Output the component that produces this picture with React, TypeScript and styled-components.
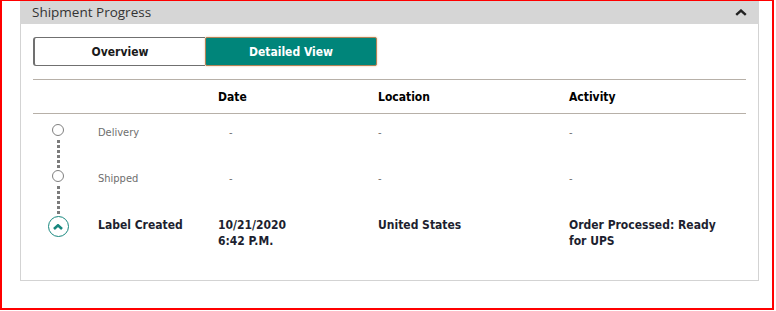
import React, {useState} from 'react';
import styled, {createGlobalStyle} from 'styled-components';

const GlobalStyle = createGlobalStyle`
  body {
    margin: 0;
    background: #fff;
    font-family: "DejaVu Sans Condensed", "DejaVu Sans", Tahoma, sans-serif;
    font-stretch: condensed;
  }
`

const Frame = styled.div`
  width: 774px;
  height: 310px;
  box-sizing: border-box;
  border: 2px solid #f00;
  border-top-width: 1px;
  padding-left: 18px;
  overflow: hidden;
`

const Panel = styled.div`
  width: 739px;
  box-sizing: border-box;
  border: 1px solid #d3d3d3;
  border-top: none;
`

const PanelHeader = styled.div`
  height: 23px;
  background-color: #d6d6d6;
  display: flex;
  align-items: center;
  justify-content: space-between;
  padding: 0 12px;
  margin: 0 -1px;
`

const PanelTitle = styled.div`
  font-family: "Open Sans", "Noto Sans", sans-serif;
  font-stretch: normal;
  font-size: 13.5px;
  color: #333;
  margin-top: -2px;
`

const PanelBody = styled.div`
  padding: 13px 12px 0;
`

const Toggle = styled.div`
  display: flex;
  width: 344px;
  height: 29px;
`

const ToggleButton = styled.button<{ $active?: boolean }>`
  flex: 1;
  font-family: inherit;
  font-stretch: condensed;
  font-weight: bold;
  font-size: 12px;
  cursor: pointer;
  color: ${p => p.$active ? '#fff' : '#1a1a1a'};
  background-color: ${p => p.$active ? '#00857a' : '#fff'};
  border: 1px solid ${p => p.$active ? '#b28357' : '#707070'};
  border-left-width: ${p => p.$active ? '1px' : '2px'};
  border-right-width: ${p => p.$active ? '1px' : '0'};
  border-radius: ${p => p.$active ? '2px' : '3px 0 0 3px'};
  box-shadow: ${p => p.$active ? '0 0 2px rgba(214, 140, 70, 0.6)' : 'none'};
`

const Table = styled.div`
  margin-top: 13px;
  border-top: 1px solid #b7b0a8;
`

const Columns = styled.div`
  display: grid;
  grid-template-columns: 65px 120px 160px 191px 1fr;
`

const HeadRow = styled(Columns)`
  height: 33px;
  align-items: center;
  border-bottom: 1px solid #b7b0a8;
`

const HeadCell = styled.div`
  font-weight: bold;
  font-size: 12px;
  color: #000;
`

const Row = styled(Columns)<{ $last?: boolean }>`
  height: ${p => p.$last ? 'auto' : '46px'};
  padding-bottom: ${p => p.$last ? '31px' : '0'};
  line-height: 16px;
`

const IconCell = styled.div`
  width: 50px;
  display: flex;
  flex-direction: column;
  align-items: center;
`

const Dots = styled.div<{ $show: boolean; $grow?: boolean }>`
  width: 3px;
  height: 10px;
  flex: ${p => p.$grow ? '1' : 'none'};
  background: ${p => p.$show
    ? 'repeating-linear-gradient(to bottom, #7b7b7b 0 3px, transparent 3px 5px)'
    : 'none'};
`

const DotsGap = styled(Dots)`
  margin-top: 4px;
`

const Circle = styled.div`
  width: 12px;
  height: 12px;
  box-sizing: border-box;
  border: 1px solid #808080;
  border-radius: 50%;
  background: #fff;
`

const ActiveCircle = styled.div`
  width: 21px;
  height: 21px;
  box-sizing: border-box;
  border: 1.5px solid #17877e;
  border-radius: 50%;
  display: flex;
  align-items: center;
  justify-content: center;
`

const Cell = styled.div<{ $strong?: boolean; $indent?: number }>`
  padding-top: 11px;
  padding-left: ${p => p.$indent || 0}px;
  font-size: ${p => p.$strong ? '12px' : '11px'};
  font-weight: ${p => p.$strong ? 'bold' : 'normal'};
  color: ${p => p.$strong ? '#1d1f30' : '#6e6e6e'};
`

const ActivityText = styled.div`
  max-width: 150px;
`

interface Step {
    status: string,
    date?: string[],
    location?: string,
    activity?: string,
}

const steps: Step[] = [
    {status: 'Delivery'},
    {status: 'Shipped'},
    {
        status: 'Label Created',
        date: ['10/21/2020', '6:42 P.M.'],
        location: 'United States',
        activity: 'Order Processed: Ready for UPS',
    },
];

function ChevronUp({color, size, weight}: { color: string, size: number, weight: number }) {
    return (
        <svg width={size} height={size * 0.6} viewBox="0 0 10 6">
            <polyline points="1,5 5,1.3 9,5" fill="none" stroke={color} strokeWidth={weight}/>
        </svg>
    )
}

function App() {
    const [view, setView] = useState('detailed');

    const renderIcon = (index: number) => {
        const first = index === 0;
        const last = index === steps.length - 1;

        if (last) {
            return (
                <IconCell>
                    <Dots $show={!first}/>
                    <ActiveCircle>
                        <ChevronUp color="#17877e" size={10} weight={2.6}/>
                    </ActiveCircle>
                </IconCell>
            )
        }

        return (
            <IconCell>
                <Dots $show={!first}/>
                <Circle/>
                <DotsGap $show $grow/>
            </IconCell>
        )
    }

    return (
        <Frame>
            <GlobalStyle/>
            <Panel>
                <PanelHeader>
                    <PanelTitle>Shipment Progress</PanelTitle>
                    <ChevronUp color="#222" size={12} weight={2}/>
                </PanelHeader>
                <PanelBody>
                    <Toggle>
                        <ToggleButton $active={view === 'overview'} onClick={() => setView('overview')}>
                            Overview
                        </ToggleButton>
                        <ToggleButton $active={view === 'detailed'} onClick={() => setView('detailed')}>
                            Detailed View
                        </ToggleButton>
                    </Toggle>
                    <Table>
                        <HeadRow>
                            <div/>
                            <div/>
                            <HeadCell>Date</HeadCell>
                            <HeadCell>Location</HeadCell>
                            <HeadCell>Activity</HeadCell>
                        </HeadRow>
                        {steps.map((step, i) => {
                            const done = !!step.date;
                            return (
                                <Row key={step.status} $last={i === steps.length - 1}>
                                    {renderIcon(i)}
                                    <Cell $strong={done}>{step.status}</Cell>
                                    {done ? (
                                        <Cell $strong>
                                            {step.date?.map(line => <div key={line}>{line}</div>)}
                                        </Cell>
                                    ) : (
                                        <Cell $indent={11}>-</Cell>
                                    )}
                                    <Cell $strong={done}>{step.location || '-'}</Cell>
                                    <Cell $strong={done}>
                                        <ActivityText>{step.activity || '-'}</ActivityText>
                                    </Cell>
                                </Row>
                            )
                        })}
                    </Table>
                </PanelBody>
            </Panel>
        </Frame>
    )
}

export default App;
